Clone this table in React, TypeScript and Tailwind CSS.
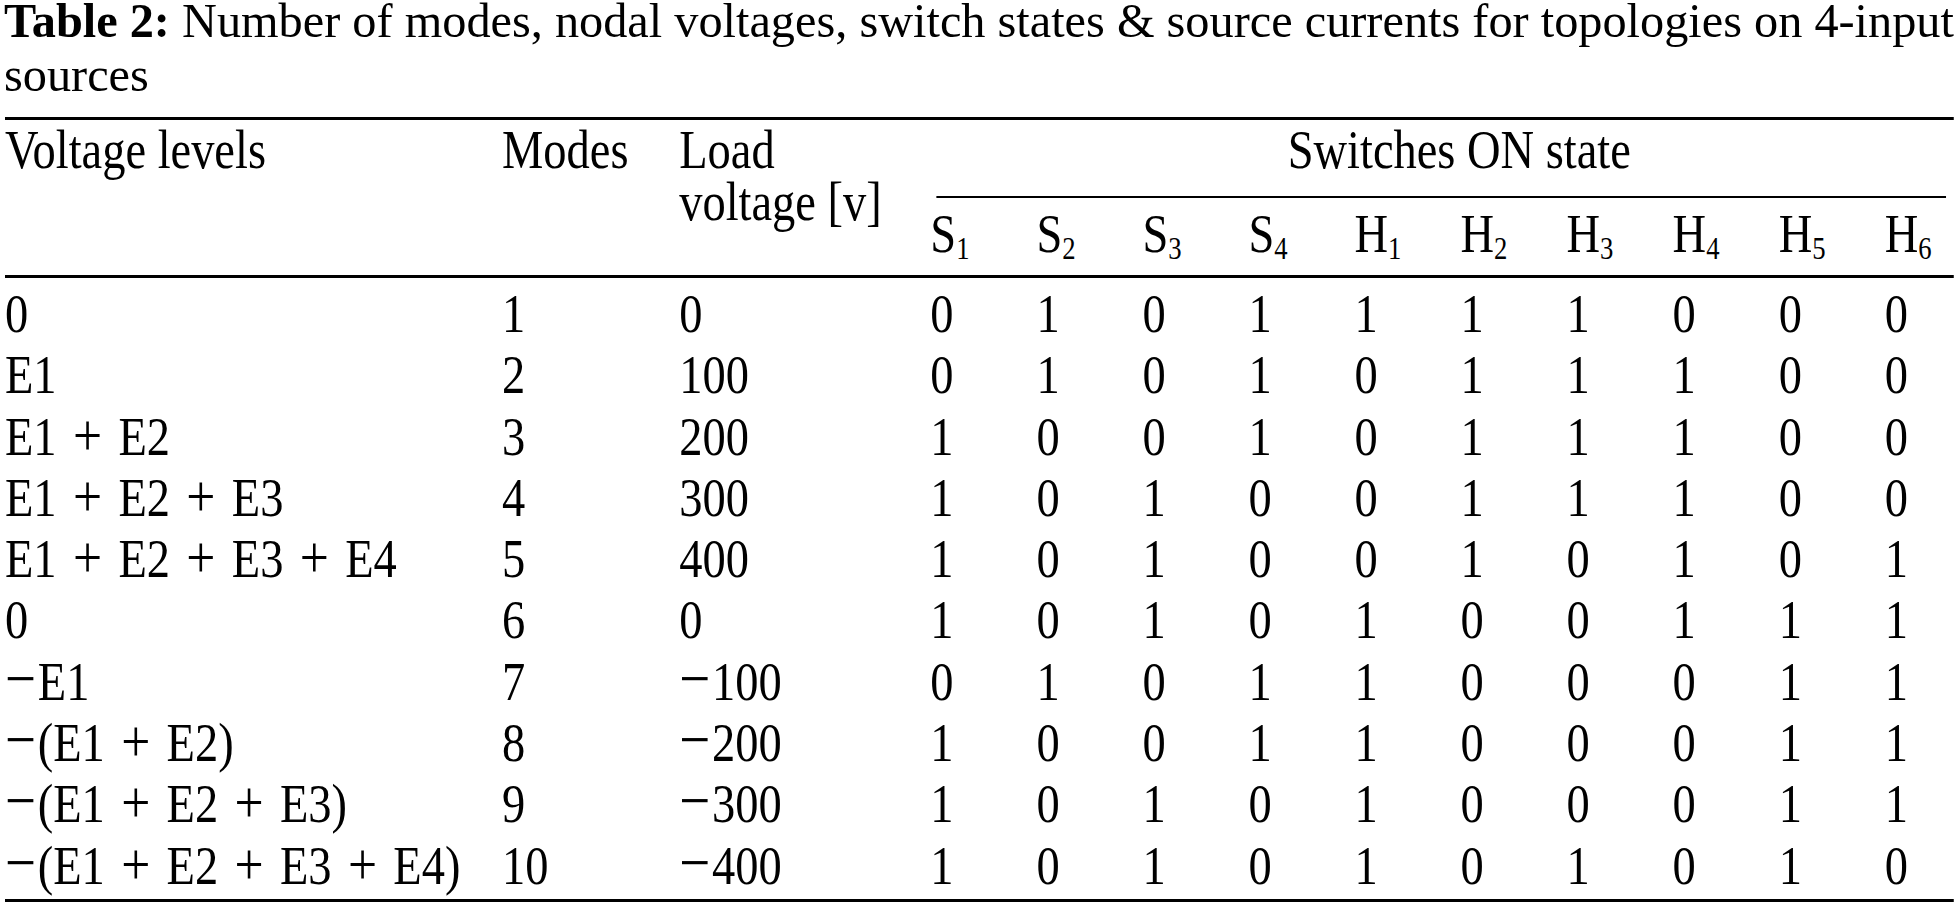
import React from "react";

const labels: [string, string][] = [
  ["S", "1"], ["S", "2"], ["S", "3"], ["S", "4"],
  ["H", "1"], ["H", "2"], ["H", "3"], ["H", "4"], ["H", "5"], ["H", "6"],
];

const rows: [string, string, string, string][] = [
  ["0", "1", "0", "0101111000"],
  ["E1", "2", "100", "0101011100"],
  ["E1 + E2", "3", "200", "1001011100"],
  ["E1 + E2 + E3", "4", "300", "1010011100"],
  ["E1 + E2 + E3 + E4", "5", "400", "1010010101"],
  ["0", "6", "0", "1010100111"],
  ["\u2212E1", "7", "\u2212100", "0101100011"],
  ["\u2212(E1 + E2)", "8", "\u2212200", "1001100011"],
  ["\u2212(E1 + E2 + E3)", "9", "\u2212300", "1010100011"],
  ["\u2212(E1 + E2 + E3 + E4)", "10", "\u2212400", "1010101010"],
];

function Expr({ text }: { text: string }) {
  const parts = text.split(/( \+ |\u2212)/).filter((p) => p !== "");
  return (
    <>
      {parts.map((p, i) => {
        if (p === " + ")
          return (
            <span key={i} className="px-[4px] text-[60px] leading-[0]">
              {" + "}
            </span>
          );
        if (p === "\u2212")
          return (
            <span key={i} className="pr-[2px] text-[64px] leading-[0]">
              {"\u2212"}
            </span>
          );
        return <React.Fragment key={i}>{p}</React.Fragment>;
      })}
    </>
  );
}

export default function App() {
  return (
    <div className="w-[1954px] h-[904px] overflow-hidden bg-white text-black font-['Liberation_Serif','Times_New_Roman',serif]">
      <p className="pl-[4px] -mt-[6px] text-[48.3px] leading-[54px]">
        <span className="font-bold">Table 2:</span> Number of modes, nodal voltages, switch states &amp; source currents for topologies on 4-input sources
      </p>
      <div className="mt-[15px] pl-[5px]">
        <div className="w-[2266px] origin-left scale-x-[0.86] border-t-[3px] border-b-[3px] border-black text-[54px]">
          <div className="grid grid-cols-[578px_206px_292px_repeat(9,123.3px)_1fr] border-b-[3px] border-black">
            <div className="row-span-2 pt-[4px] leading-[52px] whitespace-nowrap">Voltage levels</div>
            <div className="row-span-2 pt-[4px] leading-[52px] whitespace-nowrap">Modes</div>
            <div className="row-span-2 pt-[4px] leading-[52px] whitespace-nowrap">
              Load
              <br />
              voltage [v]
            </div>
            <div className="col-span-10 pt-[4px]">
              <div className="pl-[40px] text-center leading-[52px] whitespace-nowrap">Switches ON state</div>
              <div className="mt-[20px] ml-[7px] mr-[9px] border-t-2 border-black" />
            </div>
            {labels.map(([l, n], i) => (
              <div key={i} className="pt-[10px] pb-[15px] leading-[52px] whitespace-nowrap">
                {l}
                <span className="align-[-7px] text-[31px] leading-[0]">{n}</span>
              </div>
            ))}
          </div>
          <div className="grid grid-cols-[578px_206px_292px_repeat(9,123.3px)_1fr] pt-[6px] pb-[2px] leading-[61.3px]">
            {rows.map(([lvl, mode, load, bits], r) => (
              <React.Fragment key={r}>
                <div className="whitespace-nowrap">
                  <Expr text={lvl} />
                </div>
                <div className="whitespace-nowrap">{mode}</div>
                <div className="whitespace-nowrap">
                  <Expr text={load} />
                </div>
                {bits.split("").map((b, c) => (
                  <div key={c}>{b}</div>
                ))}
              </React.Fragment>
            ))}
          </div>
        </div>
      </div>
    </div>
  );
}
